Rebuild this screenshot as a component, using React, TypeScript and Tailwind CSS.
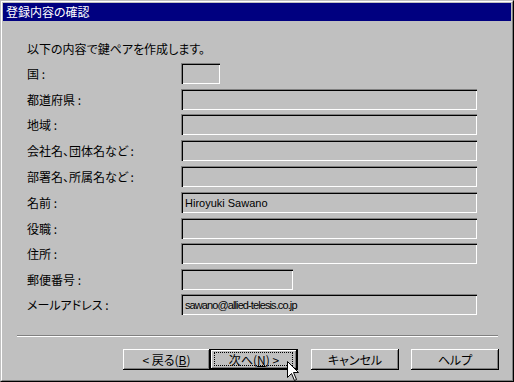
import React from 'react';

const jp = "font-['MS_UI_Gothic','Noto_Sans_CJK_JP',sans-serif] [font-feature-settings:'palt']";

const fields = [
  { label: '国 :', w: 'w-[39px]', mt: 'mt-0', value: '' },
  { label: '都道府県 :', w: 'w-[296px]', mt: 'mt-[5px]', value: '' },
  { label: '地域 :', w: 'w-[296px]', mt: 'mt-[4px]', value: '' },
  { label: '会社名、団体名など :', w: 'w-[296px]', mt: 'mt-[5px]', value: '' },
  { label: '部署名、所属名など :', w: 'w-[296px]', mt: 'mt-[5px]', value: '' },
  { label: '名前 :', w: 'w-[296px]', mt: 'mt-[5px]', value: 'Hiroyuki Sawano' },
  { label: '役職 :', w: 'w-[296px]', mt: 'mt-[5px]', value: '' },
  { label: '住所 :', w: 'w-[296px]', mt: 'mt-[4px]', value: '' },
  { label: '郵便番号 :', w: 'w-[112px]', mt: 'mt-[5px]', value: '' },
  { label: 'メールアドレス :', w: 'w-[296px]', mt: 'mt-[4px]', value: 'sawano@allied-telesis.co.jp', tight: true },
];

const Field = ({ label, w, mt, value, tight }: any) => {
  return (
    <div className={`flex items-center h-[21px] ${mt}`}>
      <div className="w-[154px] text-[12px] leading-[14px] text-black pt-[1px]">{label}</div>
      <div
        className={`${w} h-[21px] flex items-center pl-[4px] shadow-[inset_1px_1px_0_#808080,inset_2px_2px_0_#000,inset_-1px_-1px_0_#fff]`}
      >
        <span
          className={`font-['Liberation_Sans',sans-serif] text-[11px] leading-[12px] text-black pt-[1px] ${tight ? 'tracking-[-0.9px]' : ''}`}
        >
          {value}
        </span>
      </div>
    </div>
  );
};

const Button = ({ children, w, isDefault }: any) => {
  if (isDefault) {
    return (
      <div className={`${w} h-[21px] border border-black`}>
        <div className="relative h-full flex items-center justify-center text-[12px] leading-[14px] shadow-[inset_-1px_-1px_0_#000,inset_1px_1px_0_#fff,inset_-2px_-2px_0_#808080]">
          <div className="absolute left-[3px] top-[2px] right-[4px] bottom-[3px] border border-dotted border-black" />
          {children}
        </div>
      </div>
    );
  }
  return (
    <div
      className={`${w} h-[21px] flex items-center justify-center text-[12px] leading-[14px] shadow-[inset_-1px_-1px_0_#000,inset_1px_1px_0_#fff,inset_-2px_-2px_0_#808080]`}
    >
      {children}
    </div>
  );
};

export default function App() {
  return (
    <div className={`relative w-[514px] h-[382px] bg-[#c0c0c0] border border-t-[#c0c0c0] border-l-[#c0c0c0] border-r-black border-b-black ${jp}`}>
      <div className="h-full border border-t-white border-l-white border-r-[#808080] border-b-[#808080] p-px flex flex-col">
        {/* title bar */}
        <div className="h-[18px] bg-[#000080] text-white text-[12px] leading-[18px] pl-[3px]">
          登録内容の確認
        </div>

        <div className="flex-1 flex flex-col">
          <div className="pt-[20px] pl-[24px] text-[12px] leading-[16px] h-[36px] text-black">
            以下の内容で鍵ペアを作成します。
          </div>
          <div className="mt-[6px] pl-[24px] flex flex-col">
            {fields.map((f) => (
              <Field key={f.label} {...f} />
            ))}
          </div>

          {/* separator */}
          <div className="mt-[20px] ml-[14px] mr-[13px] border-t border-t-[#808080] border-b border-b-white" />

          <div className="mt-[12px] flex pl-[120px]">
            <Button w="w-[87px]">
              &lt; 戻る(<span className="underline">B</span>)
            </Button>
            <Button w="w-[88px]" isDefault>
              次へ(<span className="underline">N</span>) &gt;
            </Button>
            <div className="w-[13px]" />
            <Button w="w-[88px]">キャンセル</Button>
            <div className="w-[12px]" />
            <Button w="w-[88px]">ヘルプ</Button>
          </div>
        </div>
      </div>

      {/* mouse pointer */}
      <svg className="absolute left-[286px] top-[360px]" width="13" height="21" viewBox="0 0 13 21">
        <path d="M0.5 0.5 L0.5 16.5 L4.5 12.5 L7.5 19.5 L9.5 18.5 L6.5 11.5 L11.5 11.5 Z" fill="#fff" stroke="#000" strokeWidth="1" />
      </svg>
    </div>
  );
}
